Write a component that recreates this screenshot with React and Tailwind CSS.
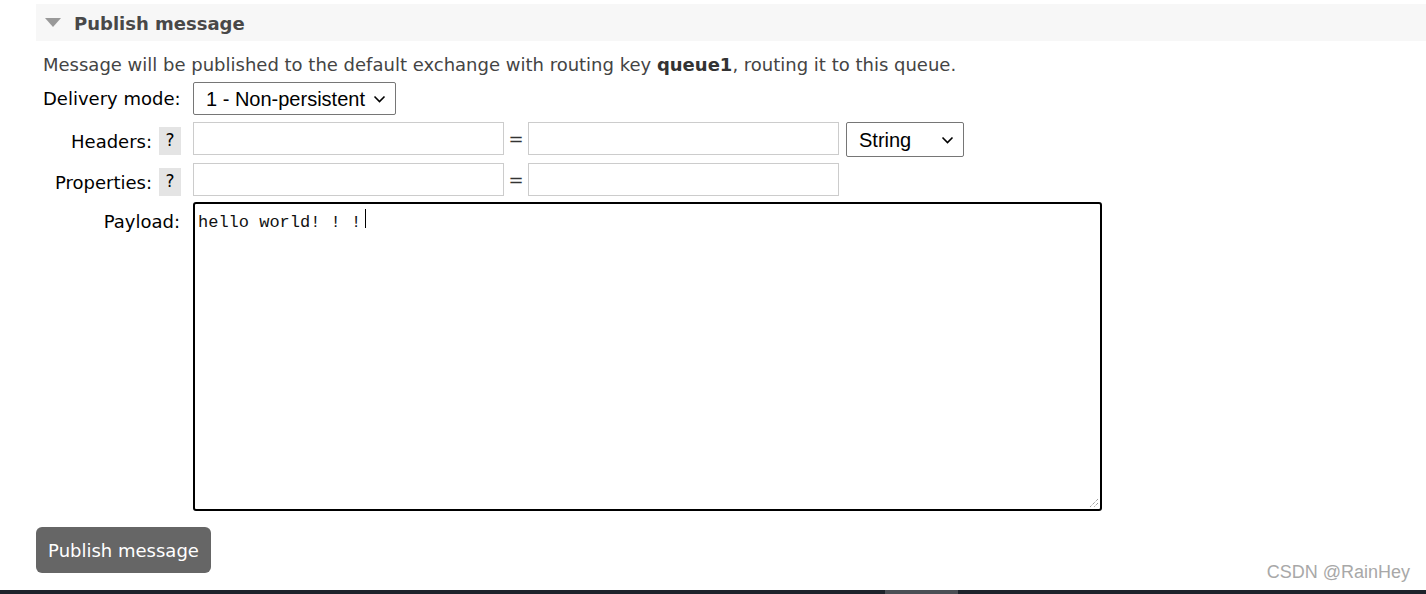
import React from 'react';

const sans = { fontFamily: '"DejaVu Sans", Verdana, sans-serif' };

function Chevron() {
  return (
    <svg width="13" height="8" viewBox="0 0 13 8" fill="none" className="shrink-0">
      <path d="M1.5 1.5 L6.5 6.5 L11.5 1.5" stroke="#000" strokeWidth="1.6" />
    </svg>
  );
}

function FakeSelect({ label, className }) {
  return (
    <div
      className={`flex items-center justify-between bg-white border border-[#767676] rounded-[2px] text-[20px] text-black ${className}`}
      style={{ fontFamily: '"Liberation Sans", Arial, sans-serif' }}
    >
      <span>{label}</span>
      <Chevron />
    </div>
  );
}

function HelpBox() {
  return (
    <span className="ml-[7px] inline-flex w-[22px] h-[28px] items-center justify-center bg-[#e4e4e4] text-[17px] text-black">
      ?
    </span>
  );
}

function KeyValueRow({ withType }) {
  return (
    <div className="flex items-start">
      <div className="w-[311px] h-[33px] border border-[#cccccc] bg-white" />
      <span className="w-[24px] h-[33px] flex items-center justify-center text-[18px] text-[#333]">=</span>
      <div className="w-[311px] h-[33px] border border-[#cccccc] bg-white" />
      {withType && <FakeSelect label="String" className="ml-[7px] w-[118px] h-[35px] pl-[12px] pr-[9px]" />}
    </div>
  );
}

export default function App() {
  return (
    <div className="w-[1426px] h-[594px] bg-white relative overflow-hidden flex flex-col" style={sans}>
      {/* Section header */}
      <div className="ml-[36px] mt-[4px] h-[37px] bg-[#f7f7f7] flex items-center pl-[9px]">
        <span className="w-0 h-0 border-l-[8px] border-r-[8px] border-t-[9px] border-l-transparent border-r-transparent border-t-[#999]" />
        <span className="ml-[13px] mt-[1px] text-[18px] font-bold text-[#484848]">Publish message</span>
      </div>

      <p className="ml-[43px] mt-[13px] text-[18px] leading-[22px] text-[#444]">
        Message will be published to the default exchange with routing key <b className="text-[#333]">queue1</b>, routing it to this queue.
      </p>

      {/* Form */}
      <div className="ml-[36px] mt-[6px] flex flex-col text-[18px] text-black">
        <div className="flex items-center h-[33px]">
          <div className="w-[145px] pl-[7px]">Delivery mode:</div>
          <FakeSelect label="1 - Non-persistent" className="ml-[12px] w-[203px] h-[33px] pl-[12px] pr-[9px]" />
        </div>

        <div className="flex items-start mt-[7px]">
          <div className="w-[145px] h-[38px] -mb-[5px] flex items-center justify-end">
            Headers:<HelpBox />
          </div>
          <div className="ml-[12px]">
            <KeyValueRow withType />
          </div>
        </div>

        <div className="flex items-start mt-[6px]">
          <div className="w-[145px] h-[38px] -mb-[5px] flex items-center justify-end">
            Properties:<HelpBox />
          </div>
          <div className="ml-[12px]">
            <KeyValueRow />
          </div>
        </div>

        <div className="flex items-start mt-[6px]">
          <div className="w-[145px] text-right pr-[1px] pt-[6px]">Payload:</div>
          <div className="ml-[12px] relative w-[909px] h-[309px] border-2 border-black rounded-[3px] bg-white px-[3px] pt-[3px]">
            <span className="text-[17px] leading-[20px] text-[#111]" style={{ fontFamily: '"Liberation Mono", "Courier New", monospace' }}>
              hello world! ! !
            </span>
            <span className="inline-block align-top ml-[4px] mt-[2px] w-[1px] h-[19px] bg-black" />
            <svg className="absolute right-[1px] bottom-[1px]" width="11" height="11" viewBox="0 0 11 11">
              <path d="M10 2 L2 10 M10 6 L6 10" stroke="#777" strokeWidth="1" strokeDasharray="1 1" />
            </svg>
          </div>
        </div>
      </div>

      <button className="ml-[36px] mt-[16px] w-[175px] h-[46px] rounded-[6px] bg-[#666666] text-white text-[18px]" style={sans}>
        Publish message
      </button>

      <span
        className="absolute right-[16px] bottom-[8px] text-[18px] text-[#a8a8a8]"
        style={{ fontFamily: '"Liberation Sans", Arial, sans-serif' }}
      >
        CSDN @RainHey
      </span>

      {/* bottom scrollbar strip */}
      <div className="mt-auto h-[4px] bg-[#1d232b] flex">
        <div className="ml-[885px] w-[73px] bg-[#4b4f55]" />
      </div>
    </div>
  );
}
